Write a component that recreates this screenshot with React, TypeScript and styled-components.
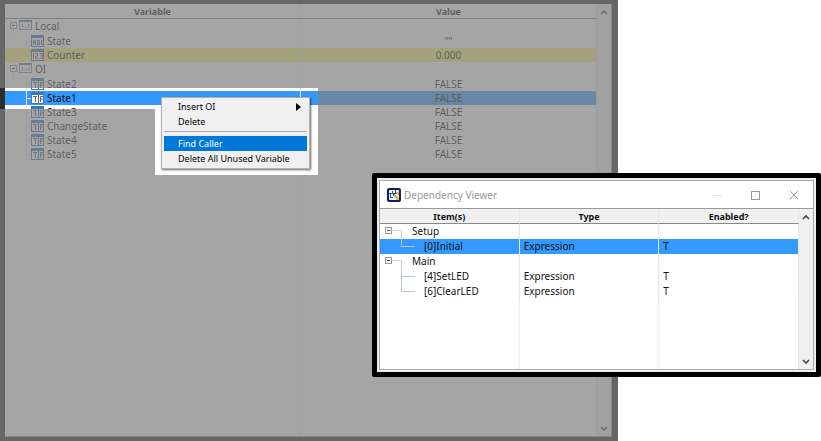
import React from "react";
import styled, { createGlobalStyle, css } from "styled-components";

const Global = createGlobalStyle`
  *, *::before, *::after { box-sizing: border-box; }
  html, body, #root { height: 100%; }
  body { margin: 0; background: #fff; color: #111; font: 10px/14px "Noto Sans", "Open Sans", sans-serif; overflow: hidden; }
  button { font: inherit; color: inherit; border: 0; background: none; padding: 0; margin: 0; }
`;

const Stage = styled.main`
  position: relative;
  height: 100%;
  display: grid;
  grid-template-columns: minmax(0, 618fr) minmax(0, 203fr);
`;

const EditorWindow = styled.section`
  position: relative;
  display: flex;
  padding: 4px 6px 4px 5px;
  background: #302c2c;
`;

const Pane = styled.div`
  flex: 1;
  min-width: 0;
  display: flex;
  background: #fff;
  border-right: 1px solid #999;
  border-bottom: 1px solid #999;
`;

const Grid = styled.table<{ $item: number }>`
  width: 100%;
  border-collapse: separate;
  border-spacing: 0;
  table-layout: fixed;
  line-height: ${(p) => p.$item}px;
`;

const GridArea = styled.div<{ $cols: number }>`
  flex: 1;
  min-width: 0;
  background-image: linear-gradient(to right, transparent calc(100% - 1px), #e8e8e8 0);
  background-size: calc(100% / ${(p) => p.$cols}) 100%;
`;

const Head = styled.th<{ $h: number; $fill?: string }>`
  height: ${(p) => p.$h}px;
  padding: 0;
  font-weight: 700;
  font-size: 9px;
  line-height: 13px;
  background: ${(p) => p.$fill ?? "transparent"};
  border-bottom: 1px solid #888;
  border-right: 1px solid #e8e8e8;
`;

type Tone = "plain" | "warn" | "selected";
const tones = { plain: "transparent", warn: "#fff078", selected: "#3399ff" };

const Row = styled.tr<{ $tone?: Tone; $h: number }>`
  height: ${(p) => p.$h}px;
  background: ${(p) => tones[p.$tone ?? "plain"]};
`;

const Cell = styled.td<{ $center?: boolean }>`
  padding: 0 0 0 ${(p) => (p.$center ? 0 : 4)}px;
  text-align: ${(p) => (p.$center ? "center" : "left")};
  border-right: 1px solid #e8e8e8;
  white-space: nowrap;
`;

const TreeCell = styled.td`
  padding: 0;
  border-right: 1px solid #e8e8e8;
`;

const Branch = styled.div<{ $h: number }>`
  display: flex;
  align-items: center;
  height: ${(p) => p.$h}px;
  line-height: ${(p) => p.$h}px;
  white-space: nowrap;
`;

const Label = styled.span<{ $gap: number }>`
  padding-left: ${(p) => p.$gap}px;
`;

const ScrollTrack = styled.div`
  width: 14px;
  display: flex;
  flex-direction: column;
  justify-content: space-between;
  background: #f0f0f0;
`;

const ScrollButton = styled.button`
  height: 15px;
  display: grid;
  place-items: center;
`;

const cover = css`
  position: absolute;
  inset: 0;
`;

const Dim = styled.div`
  ${cover}
  background: rgba(127, 127, 127, 0.7);
  clip-path: polygon(0 0, 100% 0, 100% 100%, 0 100%, 0 109px, 155px 109px, 155px 175px, 318px 175px, 318px 88px, 0 88px);
  pointer-events: none;
`;

const MenuBackdrop = styled.div`
  position: absolute;
  left: 155px;
  top: 105px;
  width: 163px;
  height: 70px;
  background: #fff;
`;

const Menu = styled.div`
  position: absolute;
  left: 161px;
  top: 97px;
  width: 149px;
  padding: 1px 2px 2px;
  display: flex;
  flex-direction: column;
  background: #f0f0f0;
  border: 1px solid #b0b0b0;
  box-shadow: 1px 1px 2px rgba(0, 0, 0, 0.6);
  font-size: 9px;
`;

const MenuItem = styled.button<{ $active?: boolean }>`
  display: flex;
  align-items: center;
  justify-content: space-between;
  height: 15px;
  padding: 0 6px 0 14px;
  white-space: nowrap;
  background: ${(p) => (p.$active ? "#0078d7" : "transparent")};
  color: ${(p) => (p.$active ? "#fff" : "#000")};
`;

const Rule = styled.hr`
  width: 100%;
  height: 1px;
  margin: 2px 0 4px;
  border: 0;
  background: #a8a8a8;
`;

const DialogFrame = styled.section`
  position: absolute;
  left: 372px;
  right: 0;
  top: 173px;
  height: 204px;
  padding: 2px;
  display: flex;
  border: 5px solid #000;
  border-radius: 2px;
  background: #eee;
`;

const Dialog = styled.div`
  flex: 1;
  min-width: 0;
  display: flex;
  flex-direction: column;
  background: #fff;
  border: 1px solid #aaa;
`;

const TitleBar = styled.header`
  display: flex;
  align-items: center;
  height: 27px;
  padding: 0 14px 0 7px;
  gap: 3px;
  color: #999;
`;

const Title = styled.h1`
  flex: 1;
  margin: 0;
  font-size: 10px;
  font-weight: 400;
`;

const WindowButtons = styled.div`
  display: flex;
  gap: 28px;
`;

const WindowButton = styled.button`
  display: flex;
`;

const DialogBody = styled.div`
  flex: 1;
  display: flex;
  min-height: 0;
  border-top: 1px solid #999;
`;

const Caret = ({ up }: { up?: boolean }) => (
  <svg width="8" height="6" viewBox="0 0 8 6" fill="none" stroke="#444" strokeWidth="1.6">
    <path d={up ? "M1 5 4 2 7 5" : "M1 1 4 4 7 1"} />
  </svg>
);

const Scrollbar = () => (
  <ScrollTrack>
    <ScrollButton aria-label="Scroll up"><Caret up /></ScrollButton>
    <ScrollButton aria-label="Scroll down"><Caret /></ScrollButton>
  </ScrollTrack>
);

const Expander = () => (
  <>
    <rect x="5.5" y="3.5" width="6" height="6" fill="#fff" stroke="#999" />
    <path d="M7 6.5H10" stroke="#445" />
  </>
);

const GroupGlyph = () => (
  <svg width="28" height="15" viewBox="0 0 28 15" fill="none">
    <path d="M8.5 15V10M12 6.5H15" stroke="#ddd" />
    <Expander />
    <rect x="14.5" y="1.5" width="12" height="9" fill="#fff" stroke="#889" />
    <path d="M14 2H27" stroke="#4080c0" strokeWidth="2" />
    <path d="M18 5H17.5V8.5H18M23.5 5H24V8.5H23.5M19.5 8H20.5M21.5 8H22.5" stroke="#888" />
  </svg>
);

type Kind = "abc" | "num" | "bool";

const kindPaths: Record<Kind, string> = {
  abc: "M25.5 11V6.5H27.5V11M25.5 8.5H27.5M29.5 11V5.5M29.5 6.5H31.5V10.5H29.5M35 6.5H33.5V10.5H35",
  num: "M25.5 5V11M27 5.5H29.5V8H27.5V10.5H30M31.5 5.5H34.5V10.5H31.5M32 8H34.5",
  bool: "M25 5.5H29M27.5 5V11M30.5 4V12M32.5 11V5.5H35M32.5 8H35",
};

const VariableGlyph = ({ kind }: { kind: Kind }) => (
  <svg width="40" height="14" viewBox="0 0 40 14" fill="none">
    <path d="M21.5 0V14M22 7.5H26" stroke="#e4e4e4" />
    <g transform="translate(3 0)">
      <rect x="23.5" y="1.5" width="12" height="11" fill="#fff" stroke="#3a78b8" />
      <path d="M23 2.5H36" stroke="#3a78b8" strokeWidth="3" />
      <path d={kindPaths[kind]} stroke="#666" />
    </g>
  </svg>
);

const variables: { name: string; value?: string; kind?: Kind; tone?: Tone }[] = [
  { name: "Local" },
  { name: "State", value: '""', kind: "abc" },
  { name: "Counter", value: "0.000", kind: "num", tone: "warn" },
  { name: "OI" },
  { name: "State2", value: "FALSE", kind: "bool" },
  { name: "State1", value: "FALSE", kind: "bool", tone: "selected" },
  { name: "State3", value: "FALSE", kind: "bool" },
  { name: "ChangeState", value: "FALSE", kind: "bool" },
  { name: "State4", value: "FALSE", kind: "bool" },
  { name: "State5", value: "FALSE", kind: "bool" },
];

const callers: { name: string; group?: boolean; last?: boolean; tone?: Tone }[] = [
  { name: "Setup", group: true },
  { name: "[0]Initial", last: true, tone: "selected" },
  { name: "Main", group: true },
  { name: "[4]SetLED" },
  { name: "[6]ClearLED", last: true },
];

const CallerGlyph = ({ group, last }: { group?: boolean; last?: boolean }) =>
  group ? (
    <svg width="28" height="15" viewBox="0 0 28 15" fill="none">
      <path d="M12 6.5H21.5V15" stroke="#d4d4d4" />
      <Expander />
    </svg>
  ) : (
    <svg width="40" height="15" viewBox="0 0 40 15" fill="none">
      <path d={last ? "M21.5 0V7.5H35" : "M21.5 0V15M22 7.5H35"} stroke="#b8c4d0" />
    </svg>
  );

const AppGlyph = () => (
  <svg width="14" height="14" viewBox="0 0 14 14">
    <rect width="14" height="14" rx="2" fill="#10205c" />
    <rect x="2" y="2" width="10" height="10" rx="1" fill="#f4f6ff" />
    <path d="M2 5H5V3H6V5H8V2H9V5H11V6H8V8H6V6H4V9H6V10H3V6H2z" fill="#2850a0" />
    <path d="M7 7H9L12 10V12H10L7 9z" fill="#e0b840" />
    <path d="M9 4H12V7H10z" fill="#e0b840" />
  </svg>
);

export default function App() {
  return (
    <>
      <Global />
      <Stage>
        <EditorWindow>
          <Pane>
            <GridArea $cols={2}>
              <Grid $item={14}>
                <thead>
                  <tr><Head $h={15}>Variable</Head><Head $h={15}>Value</Head></tr>
                </thead>
                <tbody>
                  {variables.map((v) => (
                    <Row key={v.name} $tone={v.tone} $h={v.kind ? 14 : 15}>
                      <TreeCell>
                        <Branch $h={v.kind ? 14 : 15}>
                          {v.kind ? <VariableGlyph kind={v.kind} /> : <GroupGlyph />}
                          <Label $gap={2}>{v.name}</Label>
                        </Branch>
                      </TreeCell>
                      <Cell $center>{v.value}</Cell>
                    </Row>
                  ))}
                </tbody>
              </Grid>
            </GridArea>
            <Scrollbar />
          </Pane>
          <MenuBackdrop />
          <Dim />
          <Menu role="menu">
            <MenuItem role="menuitem">
              Insert OI
              <svg width="5" height="8" viewBox="0 0 5 8"><path d="M0 0 5 4 0 8z" /></svg>
            </MenuItem>
            <MenuItem role="menuitem">Delete</MenuItem>
            <Rule />
            <MenuItem role="menuitem" $active>Find Caller</MenuItem>
            <MenuItem role="menuitem">Delete All Unused Variable</MenuItem>
          </Menu>
        </EditorWindow>
        <DialogFrame>
          <Dialog>
            <TitleBar>
              <AppGlyph />
              <Title>Dependency Viewer</Title>
              <WindowButtons>
                <WindowButton aria-label="Minimize">
                  <svg width="10" height="10" stroke="#e4e4e4"><path d="M1 5.5H9" /></svg>
                </WindowButton>
                <WindowButton aria-label="Maximize">
                  <svg width="10" height="10" fill="none" stroke="#999"><rect x="0.5" y="1.5" width="8" height="8" /></svg>
                </WindowButton>
                <WindowButton aria-label="Close">
                  <svg width="10" height="10" stroke="#999"><path d="M1 1 9 9M9 1 1 9" /></svg>
                </WindowButton>
              </WindowButtons>
            </TitleBar>
            <DialogBody>
              <GridArea $cols={3}>
                <Grid $item={15}>
                  <thead>
                    <tr>
                      <Head $h={15} $fill="#f0f0f0">Item(s)</Head>
                      <Head $h={15} $fill="#f0f0f0">Type</Head>
                      <Head $h={15} $fill="#f0f0f0">Enabled?</Head>
                    </tr>
                  </thead>
                  <tbody>
                    {callers.map((c) => (
                      <Row key={c.name} $tone={c.tone} $h={15}>
                        <TreeCell>
                          <Branch $h={15}>
                            <CallerGlyph group={c.group} last={c.last} />
                            <Label $gap={4}>{c.name}</Label>
                          </Branch>
                        </TreeCell>
                        <Cell>{c.group ? "" : "Expression"}</Cell>
                        <Cell>{c.group ? "" : "T"}</Cell>
                      </Row>
                    ))}
                  </tbody>
                </Grid>
              </GridArea>
              <Scrollbar />
            </DialogBody>
          </Dialog>
        </DialogFrame>
      </Stage>
    </>
  );
}
